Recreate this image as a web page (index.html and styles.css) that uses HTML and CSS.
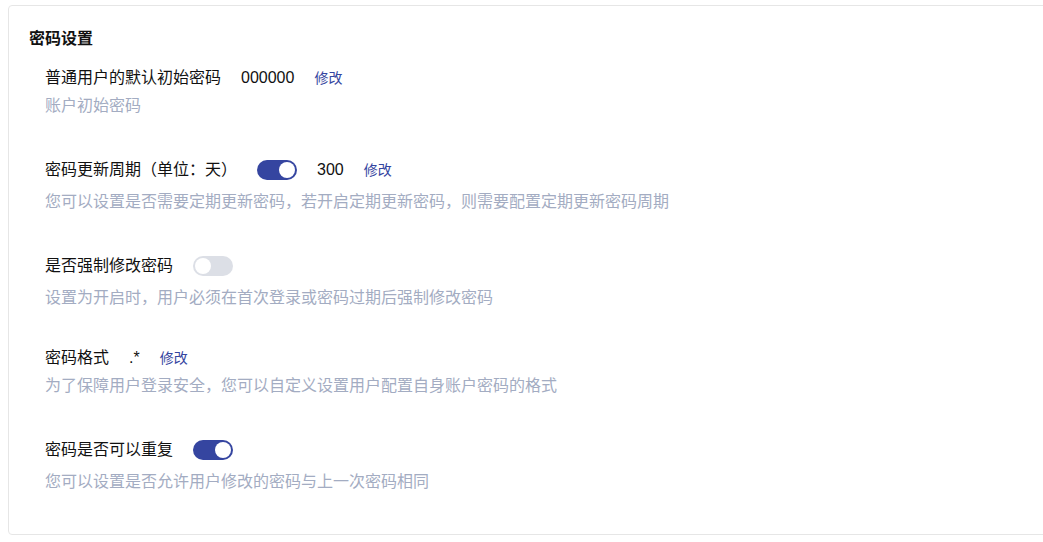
FILE: index.html
```html
<!DOCTYPE html>
<html lang="zh-CN">
<head>
  <meta charset="UTF-8" />
  <meta name="viewport" content="width=device-width, initial-scale=1.0"/>
  <title>密码设置</title>
  <link rel="stylesheet" href="styles.css">
</head>
<body>

  <section class="card">
    <h2 class="card-title">密码设置</h2>

    <div class="setting">
      <div class="setting-row">
        <span class="setting-label">普通用户的默认初始密码</span>
        <span class="setting-value">000000</span>
        <a class="edit-link" href="#">修改</a>
      </div>
      <p class="setting-desc">账户初始密码</p>
    </div>

    <div class="setting">
      <div class="setting-row tall">
        <span class="setting-label">密码更新周期（单位：天）</span>
        <button type="button" class="switch on" aria-pressed="true"></button>
        <span class="setting-value">300</span>
        <a class="edit-link" href="#">修改</a>
      </div>
      <p class="setting-desc">您可以设置是否需要定期更新密码，若开启定期更新密码，则需要配置定期更新密码周期</p>
    </div>

    <div class="setting">
      <div class="setting-row tall">
        <span class="setting-label">是否强制修改密码</span>
        <button type="button" class="switch" aria-pressed="false"></button>
      </div>
      <p class="setting-desc">设置为开启时，用户必须在首次登录或密码过期后强制修改密码</p>
    </div>

    <div class="setting">
      <div class="setting-row">
        <span class="setting-label">密码格式</span>
        <span class="setting-value">.*</span>
        <a class="edit-link" href="#">修改</a>
      </div>
      <p class="setting-desc">为了保障用户登录安全，您可以自定义设置用户配置自身账户密码的格式</p>
    </div>

    <div class="setting">
      <div class="setting-row tall">
        <span class="setting-label">密码是否可以重复</span>
        <button type="button" class="switch on" aria-pressed="true"></button>
      </div>
      <p class="setting-desc">您可以设置是否允许用户修改的密码与上一次密码相同</p>
    </div>
  </section>

  <script>
    document.querySelectorAll('.switch').forEach(btn => {
      btn.addEventListener('click', () => {
        const on = btn.classList.toggle('on');
        btn.setAttribute('aria-pressed', on);
      });
    });
  </script>
</body>
</html>
```

FILE: styles.css
```css
:root {
  --primary: #3545a0;
  --text: #111;
  --muted: #a3acc2;
  --border: #e6e6e6;
  --switch-off: #dcdfe6;
}

* {
  box-sizing: border-box;
}

html,
body {
  overflow: hidden;
}

body {
  margin: 5px 0 0 8px;
  background: #fff;
  color: var(--text);
  font-family: 'Liberation Sans', 'Noto Sans CJK SC', sans-serif;
}

.card {
  margin-right: -20px;
  padding: 21px 20px 42px;
  border: 1px solid var(--border);
  border-radius: 4px;
  background: #fff;
}

.card-title {
  margin: 0 0 17px;
  font-size: 16px;
  line-height: 24px;
  font-weight: bold;
}

.setting {
  padding-left: 16px;
  margin-bottom: 40px;
}

.setting:last-child {
  margin-bottom: 0;
}

.setting-row {
  display: flex;
  align-items: center;
  gap: 20px;
  height: 20px;
  font-size: 16px;
  line-height: 20px;
}

.setting-row.tall {
  height: 28px;
}

.setting-label {
  white-space: nowrap;
}

.edit-link {
  font-size: 14px;
  color: var(--primary);
  text-decoration: none;
}

.edit-link:hover {
  text-decoration: underline;
}

.setting-desc {
  margin: 8px 0 0;
  font-size: 16px;
  line-height: 20px;
  color: var(--muted);
}

.switch {
  position: relative;
  flex: none;
  width: 40px;
  height: 20px;
  padding: 0;
  border: none;
  border-radius: 10px;
  background: var(--switch-off);
  cursor: pointer;
  transition: background-color 0.2s;
}

.switch::after {
  content: '';
  position: absolute;
  top: 2px;
  left: 2px;
  width: 16px;
  height: 16px;
  border-radius: 50%;
  background: #fff;
  transition: left 0.2s;
}

.switch.on {
  background: var(--primary);
}

.switch.on::after {
  left: 22px;
}
```
